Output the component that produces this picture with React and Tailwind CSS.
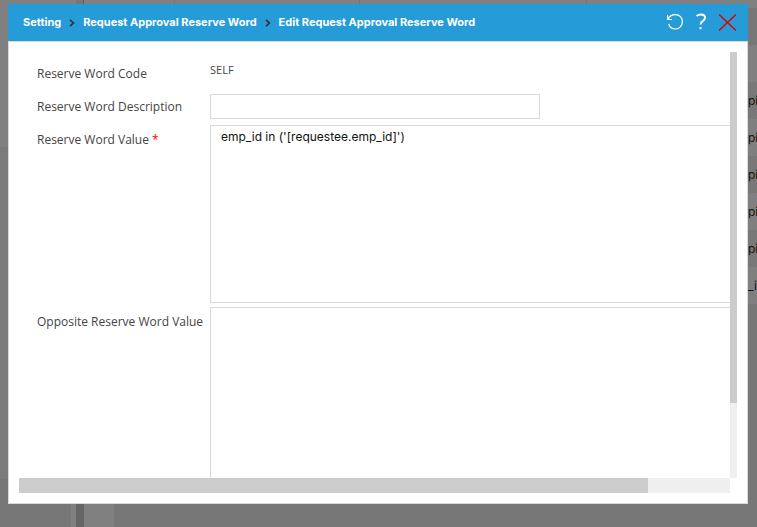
import React from "react";

const rows = ["pi", "pi", "pi", "pi", "pi", "_i"];

function Backdrop() {
  return (
    <div aria-hidden="true" className="flex h-screen w-full flex-col overflow-hidden bg-[#777777]">
      <div className="flex min-h-0 flex-1">
        <div className="flex w-[76px] flex-col">
          <div className="h-[147px] bg-[#808080]" />
          <div className="flex-1 bg-[#7b7b7b]" />
        </div>
        <div className="w-[7px] bg-[#777777]" />
        <div className="flex flex-1 bg-[#808080]">
          <div className="w-[92px] border-r border-l border-r-[#757575] border-l-[#606060]" />
          <div className="w-[185px] border-r border-[#757575]" />
          <div className="w-[227px] border-r border-[#757575]" />
        </div>
        <div className="flex w-[9px] flex-col overflow-hidden bg-[#777777] text-[12px] leading-4 text-[#111111]">
          <div className="h-2 bg-[#808080]" />
          <div className="h-[37px] bg-[#777777]" />
          <div className="h-[37px] bg-[#808080]" />
          {rows.map((text, i) => (
            <div
              key={i}
              className="flex h-[37px] items-center whitespace-nowrap odd:bg-[#7f7f7f] even:bg-[#787878]"
            >
              {text}
            </div>
          ))}
        </div>
      </div>
      <div className="flex h-12">
        <div className="w-[71px]" />
        <div className="w-[5px] bg-[#808080]" />
        <div className="w-2 bg-[#666666]" />
        <div className="w-[30px] bg-[#808080]" />
      </div>
    </div>
  );
}

function Chevron() {
  return (
    <svg viewBox="0 0 6 8" className="mx-2 mt-0.5 h-2 w-1.5" fill="none" stroke="#333333" strokeWidth="1.700">
      <path d="M1 .8 4.400 4 1 7.200" />
    </svg>
  );
}

function Header() {
  return (
    <header className="flex h-[37px] shrink-0 items-center bg-[#259cd7] pr-3 pl-[15px] text-white">
      <nav className="flex flex-1 items-center pb-0.5 text-[11px] leading-4 font-bold whitespace-nowrap">
        <a href="#setting">Setting</a>
        <Chevron />
        <a href="#request">Request Approval Reserve Word</a>
        <Chevron />
        <span>Edit Request Approval Reserve Word</span>
      </nav>
      <div className="flex items-center gap-[10px] pb-px">
        <button type="button" aria-label="Reload">
          <svg viewBox="0 0 16 16" className="size-4" fill="none" stroke="currentColor" strokeWidth="1.200">
            <path d="M.6 1v4.500H5M1 5.500C2.200 2.300 5 .6 8.500 .6c4.100 0 6.900 3.200 6.900 7.200s-3.100 7.200-6.900 7.200c-3.300 0-6-2-6.800-5" />
          </svg>
        </button>
        <button type="button" aria-label="Help" className="w-4">
          <svg viewBox="0 0 16 18" className="h-[18px] w-4" fill="none" stroke="currentColor" strokeWidth="2">
            <path d="M3.500 3C4.900 2 6.300 1.500 7.800 1.500c2.700 0 4.200 1.300 4.200 3.300 0 3.300-4.500 3.300-4.500 6.700M7.500 14v2.300" />
          </svg>
        </button>
        <button type="button" aria-label="Close">
          <svg viewBox="0 0 17 17" className="size-[17px]" fill="none" stroke="#dd0000" strokeWidth="1.400">
            <path d="M0 .5 17 16.500M17 .5 0 16.500" />
          </svg>
        </button>
      </div>
    </header>
  );
}

const labelClass = "w-[173px] shrink-0 font-['Open_Sans','Liberation_Sans',sans-serif] text-[12px] leading-4 whitespace-nowrap text-[#444444]";
const boxClass = "shrink-0 rounded-none border border-[#d9d9d9] bg-white px-[10px] text-[12px] leading-4 text-[#111111] outline-none";

export default function App() {
  return (
    <div className="relative font-[Inter,'Liberation_Sans',sans-serif]">
      <Backdrop />
      <div className="fixed inset-0 flex pt-1 pr-[9px] pb-[23px] pl-2">
        <section role="dialog" aria-label="Edit Request Approval Reserve Word" className="flex min-w-0 flex-1 flex-col bg-white">
          <Header />
          <div className="flex min-h-0 flex-1 flex-col border border-[#d9d9d9] p-[10px]">
            <div className="flex min-h-0 flex-1">
              <form className="flex min-w-0 flex-1 flex-col gap-1 overflow-hidden pt-[10px] pl-[18px]">
                <div className="flex h-7 shrink-0">
                  <span className={labelClass + " pt-1"}>Reserve Word Code</span>
                  <output className="font-['Open_Sans','Liberation_Sans',sans-serif] text-[11px] leading-4 text-[#444444]">SELF</output>
                </div>
                <div className="flex h-[27px] shrink-0">
                  <label htmlFor="description" className={labelClass + " pt-[5px]"}>Reserve Word Description</label>
                  <input id="description" className={boxClass + " h-[25px] w-[330px]"} />
                </div>
                <div className="flex shrink-0">
                  <label htmlFor="value" className={labelClass + " pt-[7px]"}>
                    Reserve Word Value <span className="text-[#ff0000]">*</span>
                  </label>
                  <textarea id="value" className={boxClass + " h-[178px] w-[600px] resize-none pt-[3px]"} defaultValue="emp_id in ('[requestee.emp_id]')" />
                </div>
                <div className="flex shrink-0">
                  <label htmlFor="opposite" className={labelClass + " pt-[7px]"}>Opposite Reserve Word Value</label>
                  <textarea id="opposite" className={boxClass + " h-[178px] w-[600px] resize-none pt-[3px]"} />
                </div>
              </form>
              <div className="w-[7px] bg-[#efefef]">
                <div className="h-[82.400%] bg-[#cccccc]" />
              </div>
            </div>
            <div className="mr-[7px] h-[15px] shrink-0 bg-[#efefef]">
              <div className="h-full w-[88.500%] bg-[#cccccc]" />
            </div>
          </div>
        </section>
      </div>
    </div>
  );
}
